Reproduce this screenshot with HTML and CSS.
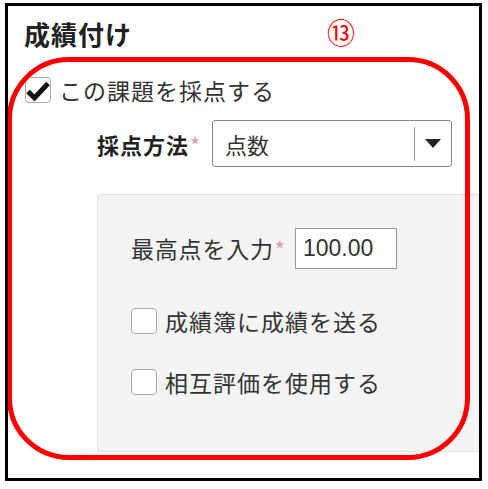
FILE: index.html
```html
<!DOCTYPE html>
<html lang="ja">
  <head>
    <meta charset="UTF-8" />
    <meta name="viewport" content="width=device-width, initial-scale=1.0" />
    <title>成績付け</title>
    <link rel="stylesheet" href="styles.css">
  </head>
  <body>
    <section class="frame">
      <h2 class="title">成績付け</h2>

      <label class="check-row">
        <span class="box checked">
          <svg viewBox="0 0 26 26" width="26" height="26">
            <path d="M3 14.5 L9.5 21 L23 6.5" fill="none" stroke="#111" stroke-width="5" stroke-linejoin="miter" />
          </svg>
        </span>
        <span class="check-text">この課題を採点する</span>
      </label>

      <div class="method-row">
        <span class="field-label">採点方法<span class="req">*</span></span>
        <div class="select">
          <span class="select-value">点数</span>
          <span class="select-arrow"></span>
        </div>
      </div>

      <div class="panel">
        <div class="max-row">
          <span class="panel-label">最高点を入力<span class="req">*</span></span>
          <div class="text-input">100.00</div>
        </div>

        <label class="check-row sub">
          <span class="box"></span>
          <span class="check-text">成績簿に成績を送る</span>
        </label>

        <label class="check-row sub">
          <span class="box"></span>
          <span class="check-text">相互評価を使用する</span>
        </label>
      </div>

      <!-- 注釈 -->
      <div class="callout"></div>
      <span class="callout-num">⑬</span>
    </section>
  </body>
</html>
```

FILE: styles.css
```css
* {
  margin: 0;
  padding: 0;
  box-sizing: border-box;
  font-family: "Noto Sans CJK JP", "Noto Sans", sans-serif;
}

body {
  background: white;
  color: #333;
}

.frame {
  position: relative;
  margin: 3px 6px 0 5px;
  width: 477px;
  height: 478px;
  border: 3px solid #000;
  overflow: hidden;
}

.title {
  font-size: 26px;
  line-height: 26px;
  font-weight: bold;
  color: #222;
  letter-spacing: 1px;
  padding: 15px 0 0 16px;
}

.check-row {
  display: flex;
  align-items: center;
  gap: 8px;
  font-size: 23px;
  line-height: 23px;
  letter-spacing: 1px;
}

.frame > .check-row {
  margin: 30px 0 0 17px;
}

.box {
  width: 26px;
  height: 26px;
  border: 1px solid #aaa;
  border-radius: 4px;
  background: white;
  position: relative;
  flex-shrink: 0;
}

.box svg {
  position: absolute;
  left: -1px;
  top: -1px;
}

.method-row {
  display: flex;
  align-items: center;
  margin: 17px 0 0 89px;
}

.field-label {
  font-size: 22px;
  line-height: 22px;
  font-weight: bold;
  color: #222;
  letter-spacing: 1px;
  width: 115px;
}

.req {
  color: #dc9a9a;
  font-size: 22px;
  font-weight: normal;
  margin-left: 1px;
}

.select {
  display: flex;
  align-items: center;
  width: 240px;
  height: 47px;
  border: 1px solid #888;
  border-radius: 3px;
  padding-left: 12px;
}

.select-value {
  flex: 1;
  font-size: 22px;
  line-height: 22px;
}

.select-arrow {
  width: 37px;
  height: 34px;
  border-left: 1px solid #999;
  display: flex;
  align-items: center;
  justify-content: center;
}

.select-arrow::after {
  content: "";
  border-left: 8px solid transparent;
  border-right: 8px solid transparent;
  border-top: 9px solid #222;
}

.panel {
  margin: 27px 0 0 89px;
  height: 258px;
  background: #f4f4f4;
  border: 1px solid #e2e2e2;
  border-right: none;
  border-radius: 4px 0 0 0;
  padding: 33px 0 0 33px;
}

.max-row {
  display: flex;
  align-items: center;
  gap: 9px;
  font-size: 23px;
  line-height: 23px;
  letter-spacing: 0.8px;
}

.panel-label .req {
  margin-left: 1px;
}

.text-input {
  width: 102px;
  height: 41px;
  border: 1px solid #999;
  background: white;
  padding: 8px 0 0 7px;
  font-family: "Liberation Sans", Arial, sans-serif;
  font-size: 23px;
  line-height: 23px;
  letter-spacing: 0;
  color: #333;
}

.panel .check-row {
  margin-top: 39px;
  gap: 8px;
}

.panel .check-row + .check-row {
  margin-top: 35px;
}

.callout {
  position: absolute;
  left: -1px;
  top: 51px;
  width: 463px;
  height: 403px;
  border: 5px solid #f00;
  border-radius: 62px;
}

.callout-num {
  position: absolute;
  left: 319px;
  top: 15px;
  font-family: "Liberation Serif", "Noto Sans CJK JP", serif;
  font-size: 28px;
  line-height: 28px;
  color: #f00;
}
```
